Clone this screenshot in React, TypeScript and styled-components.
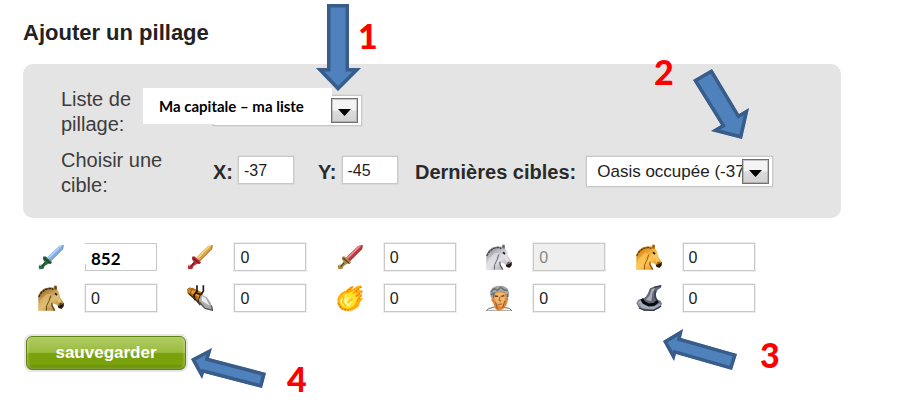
import React, { useId } from "react";
import styled, { createGlobalStyle, css } from "styled-components";

const GlobalStyle = createGlobalStyle`
  *, *::before, *::after { box-sizing: border-box; }
  body {
    margin: 0;
    background: #fff;
    color: #222;
    font-family: "Liberation Sans", Arial, sans-serif;
  }
`;

const Page = styled.main`
  position: relative;
  padding: 20px 74px 32px 23px;
`;

const Title = styled.h1`
  margin: 0 0 18px;
  font-size: 22px;
  line-height: 26px;
  font-weight: bold;
`;

const Panel = styled.section`
  display: grid;
  row-gap: 11px;
  padding: 23px 38px 20px;
  border-radius: 10px;
  background: #e4e4e4;
`;

const PanelRow = styled.div`
  display: grid;
  grid-template-columns: 152px 1fr;
  align-items: start;
`;

const RowLabel = styled.span`
  width: 110px;
  color: #3c3c3c;
  font-size: 20px;
  line-height: 25px;
`;

const RowControls = styled.div`
  padding-top: 8px;
`;

const TargetControls = styled(RowControls)`
  display: grid;
  grid-template-columns: 105px 97px auto;
`;

const Field = styled.div<{ $gap: number }>`
  display: flex;
  align-items: flex-start;
  gap: ${(p) => p.$gap}px;
`;

const FieldLabel = styled.label`
  color: #2a2a2a;
  font-size: 20px;
  line-height: 33px;
  font-weight: bold;
  white-space: nowrap;
`;

const typedStyle = css`
  border-left-width: 0;
  padding-left: 6px;
  outline: none;
  background: linear-gradient(#c8c8c8, #c8c8c8) left bottom / 1px 6px no-repeat #fff;
  color: #000;
  font-family: Lato, sans-serif;
  font-size: 17px;
  font-weight: bold;
`;

const TextInput = styled.input<{ $width: number; $typed?: boolean }>`
  width: ${(p) => p.$width}px;
  height: 28px;
  padding: 2px 5px 0;
  border: 1px solid #c8c8c8;
  outline: 1px solid rgba(200, 200, 200, 0.3);
  border-radius: 0;
  background: #fff;
  color: #222;
  font-family: "Liberation Sans", Arial, sans-serif;
  font-size: 16px;

  &:disabled {
    background: #efefef;
    color: #888;
  }

  ${(p) => p.$typed && typedStyle}
`;

const SelectBox = styled.div<{ $width: number }>`
  position: relative;
  width: ${(p) => p.$width}px;
  height: 31px;
`;

const Select = styled.select`
  appearance: none;
  width: 100%;
  height: 100%;
  padding: 0 20px 0 10px;
  border: 1px solid #c8c8c8;
  outline: 1px solid rgba(200, 200, 200, 0.3);
  border-radius: 0;
  background: #fff;
  color: #222;
  font-family: "Liberation Sans", Arial, sans-serif;
  font-size: 17px;
  text-overflow: clip;
`;

const DropMark = styled.span`
  position: absolute;
  top: 3px;
  right: 4px;
  display: flex;
  align-items: center;
  justify-content: center;
  width: 27px;
  height: 25px;
  padding-top: 4px;
  border: 1px solid #707070;
  outline: 1px solid rgba(112, 112, 112, 0.35);
  outline-offset: -2px;
  background: linear-gradient(#f4f4f4 0 48%, #dcdcdc 52%, #d0d0d0);
  pointer-events: none;
`;

const SelectTag = styled.span`
  position: absolute;
  top: -7px;
  left: -70px;
  width: 189px;
  padding-left: 16px;
  background: #fff;
  color: #000;
  font-family: Lato, sans-serif;
  font-size: 15px;
  font-weight: bold;
  line-height: 36px;
  white-space: nowrap;
  pointer-events: none;
`;

const Troops = styled.section`
  display: grid;
  grid-template-columns: repeat(5, 1fr);
  gap: 13px 0;
  max-width: 762px;
  margin-top: 25px;
  padding-left: 15px;
`;

const Troop = styled.label`
  display: flex;
  align-items: center;
  gap: 21px;
  height: 28px;
`;

const TroopIcon = styled.svg`
  width: 26px;
  height: 26px;
  flex: none;
`;

const SaveButton = styled.button`
  display: block;
  width: 160px;
  height: 34px;
  margin: 24px 0 0 3px;
  padding: 0;
  border: 1px solid #5d8410;
  border-radius: 6px;
  background: linear-gradient(#a2c046 0, #abc85c 12%, #9abb3d 48%, #7aa00c 52%, #7aa30a 84%, #587c04);
  box-shadow: 0 0 0 2px #e6e6ea, inset 0 0 3px 1px rgba(225, 240, 170, 0.45);
  color: #fff;
  font-family: "Liberation Sans", Arial, sans-serif;
  font-size: 17px;
  font-weight: bold;
`;

const ArrowLayer = styled.svg`
  position: absolute;
  top: 0;
  left: 0;
  pointer-events: none;
`;

const StepNumber = styled.span<{ $x: number; $y: number }>`
  position: absolute;
  left: ${(p) => p.$x}px;
  top: ${(p) => p.$y}px;
  color: #f00;
  font-family: Lato, sans-serif;
  font-size: 34px;
  font-weight: 900;
  line-height: 34px;
  pointer-events: none;
`;

function Arrow({ points }: { points: string }) {
  const id = useId();
  return (
    <g>
      <clipPath id={id}>
        <polygon points={points} />
      </clipPath>
      <polygon points={points} clipPath={`url(#${id})`} fill="#4f81bd" stroke="#385d8a" strokeWidth="7" />
    </g>
  );
}

function Caret() {
  return (
    <svg width="13" height="7" viewBox="0 0 13 7" aria-hidden="true">
      <path d="M0 0H13L6.5 7Z" fill="#000" />
    </svg>
  );
}

function Sword({ light, mid, edge, hilt, hiltDark }: Record<"light" | "mid" | "edge" | "hilt" | "hiltDark", string>) {
  return (
    <>
      <path d="M76 2L63 6L27 41L37 52L74 15Z" fill={mid} />
      <path d="M75 3L65 6L29 41L33 45Z" fill={light} />
      <path d="M76 4L74 15L38 51" fill="none" stroke={edge} strokeWidth="3" />
      <path d="M15 38L22 37L42 54L39 60L31 59L20 66L16 75L4 76L2 69L5 62L13 62L20 54L15 46Z" fill={hilt} />
      <path d="M18 42L36 57M21 56L11 68" stroke={hiltDark} strokeWidth="4" fill="none" />
      <path d="M6 65L10 64" stroke={light} strokeWidth="3" />
    </>
  );
}

function Horse({ light, mid, shade, dark }: Record<"light" | "mid" | "shade" | "dark", string>) {
  const g = useId();
  return (
    <>
      <linearGradient id={g} x1="0" y1="0" x2="0.7" y2="1">
        <stop offset="0" stopColor={shade} />
        <stop offset="0.3" stopColor={mid} />
        <stop offset="0.65" stopColor={light} />
        <stop offset="1" stopColor={mid} />
      </linearGradient>
      <path
        d="M1 77V31L7 20L18 11L34 7L46 8L50 1L56 2L57 14L63 22L67 38L77 54L77 64L70 71L62 69L58 60L48 56L42 54L43 61L49 69L52 77Z"
        fill={`url(#${g})`}
      />
      <path d="M2 36L10 23L23 13L39 10L46 14" fill="none" stroke={dark} strokeWidth="4" strokeDasharray="8 2" />
      <path d="M50 3L56 3L56 14L49 13Z" fill={shade} />
      <path d="M8 44L26 28L39 26L31 40L22 61L12 77H1V62Z" fill={light} opacity="0.7" />
      <path d="M38 32L34 46L26 62L25 77" fill="none" stroke={shade} strokeWidth="3" />
      <path d="M42 53L42 62L50 77" fill="none" stroke={shade} strokeWidth="4" />
      <path d="M50 30L61 43L66 52" fill="none" stroke={light} strokeWidth="9" />
      <path d="M51 25L57 30" stroke="#15110c" strokeWidth="5" />
      <path d="M77 53V64L71 71L62 69L59 62L69 60Z" fill="#21170e" />
      <path d="M64 58L71 56" stroke={dark} strokeWidth="4" />
    </>
  );
}

function Ram() {
  return (
    <>
      <path d="M4 12L17 8L47 23L46 42L38 53L3 27Z" fill="#b86d0d" />
      <path d="M8 16L22 17L43 31L39 38L9 22Z" fill="#ee9a25" />
      <path d="M2 12L9 8L15 13L10 25L3 26Z" fill="#d38525" stroke="#74440c" strokeWidth="2" />
      <path d="M30 1V19L21 30L24 46M49 1V19L40 31L35 51M27 24L42 29" fill="none" stroke="#201912" strokeWidth="5" />
      <path d="M42 29L59 36L71 53L77 76L56 71L37 56L36 43Z" fill="#aaa" />
      <path d="M45 33L56 39L68 62L44 47Z" fill="#eee" />
      <path d="M37 51L54 70L77 76L73 61" fill="none" stroke="#555" strokeWidth="4" />
      <path d="M7 27L30 48L40 60" fill="none" stroke="#3e2a13" strokeWidth="4" />
    </>
  );
}

function Fireball() {
  return (
    <>
      <path
        d="M77 17L65 28L76 27L67 39L78 39L69 52L64 66L48 76L24 78L8 70L1 56L2 38L12 24L27 16L39 6L49 3L45 13L63 2L75 2L64 14Z"
        fill="#ffad08"
      />
      <path d="M74 5L51 23M76 19L56 36M74 31L60 48M47 5L31 20M4 55L15 72L41 76" fill="none" stroke="#f27a08" strokeWidth="4" strokeDasharray="6 3" />
      <path d="M54 15L44 28L61 23L52 35L64 35L57 50L50 63L33 71L15 65L7 52L10 37L20 27L36 23Z" fill="#ffe22b" />
      <path d="M13 37L31 27L25 39L42 35L30 50L48 47L39 62L20 63L10 52Z" fill="#fff68a" />
      <path d="M8 42L21 34L17 52L28 64M32 54L46 40" fill="none" stroke="#ffc015" strokeWidth="5" />
    </>
  );
}

function Senator() {
  return (
    <>
      <path d="M1 78L7 71L25 66L53 67L70 70L78 78Z" fill="#eee" stroke="#777" strokeWidth="3" />
      <path d="M20 26L30 16L54 16L64 27L67 43L61 61L51 73L36 78L27 70L22 55L16 46Z" fill="#d9883c" />
      <path d="M27 27L38 21L55 24L58 37L55 55L47 65L35 59L25 41Z" fill="#f2b56c" />
      <path d="M12 23L18 9L31 3L51 2L64 10L70 23L68 37L60 34L56 22L43 18L29 22L24 35L15 39Z" fill="#a4a9a9" />
      <path d="M14 20L25 11L34 16L44 7L55 15L65 16M14 30L24 24L22 37M64 27L65 36" fill="none" stroke="#626b6d" strokeWidth="4" />
      <path d="M27 33L36 34M46 34L55 32" stroke="#5d3218" strokeWidth="4" />
      <path d="M42 35L39 47L46 48M36 58L49 57M29 52L34 72M56 48L50 69" fill="none" stroke="#a35323" strokeWidth="3" />
    </>
  );
}

function Hat() {
  return (
    <>
      <path d="M1 54L7 44L24 39L57 41L74 47L78 56L72 69L53 77L25 77L9 70Z" fill="#777d8e" />
      <path d="M4 52L20 42L17 54L32 62L51 66L67 58L75 57L65 69L46 74L18 69Z" fill="#a2aab6" />
      <path d="M18 43L29 36L36 25L42 10L54 5L77 1L75 8L65 14L59 28L64 48L52 60L33 59L20 52Z" fill="#656777" />
      <path d="M30 44L41 31L47 13L57 9L49 26L46 49Z" fill="#aaadb9" />
      <path d="M17 42L24 53L39 60L54 58L66 48" fill="none" stroke="#08090d" strokeWidth="9" />
      <path d="M54 7L75 2M58 18L57 36L64 47M9 69L25 75L53 76L75 63" fill="none" stroke="#363849" strokeWidth="4" />
    </>
  );
}

const troops = [
  { name: "Phalange", value: "852", typed: true, icon: <Sword light="#b0cff5" mid="#83ace0" edge="#628cbf" hilt="#326b43" hiltDark="#183e2b" /> },
  { name: "Combattant à l'épée", value: "0", icon: <Sword light="#f8d07d" mid="#dba146" edge="#9a6728" hilt="#b63039" hiltDark="#78151e" /> },
  { name: "Légionnaire", value: "0", icon: <Sword light="#ee8c8c" mid="#bd363e" edge="#872831" hilt="#a98d4c" hiltDark="#62401e" /> },
  { name: "Éclaireur", value: "0", disabled: true, icon: <Horse light="#e2e1e5" mid="#aaaab1" shade="#67666e" dark="#444249" /> },
  { name: "Éclair", value: "0", icon: <Horse light="#ffc657" mid="#df961d" shade="#9c5510" dark="#6b3b10" /> },
  { name: "Cavalier", value: "0", icon: <Horse light="#dfbd72" mid="#af8138" shade="#654518" dark="#38240f" /> },
  { name: "Bélier", value: "0", icon: <Ram /> },
  { name: "Catapulte", value: "0", icon: <Fireball /> },
  { name: "Chef", value: "0", icon: <Senator /> },
  { name: "Héros", value: "0", icon: <Hat /> },
];

const arrows = [
  "327,4 349,4 349,68 361,68 338,91 316,68 327,68",
  "693,80 712,69 739,114 749,108 742,139 711,131 721,125",
  "663,341 683,329 681,338 737,354 732,370 676,354 674,361",
  "191,359 212,348 209,358 266,373 262,388 204,373 202,379",
];

export default function App() {
  return (
    <>
      <GlobalStyle />
      <Page>
        <Title>Ajouter un pillage</Title>
        <Panel>
          <PanelRow>
            <RowLabel as="label" htmlFor="list">Liste de pillage:</RowLabel>
            <RowControls>
              <SelectBox $width={149}>
                <Select id="list" />
                <SelectTag>Ma capitale – ma liste</SelectTag>
                <DropMark><Caret /></DropMark>
              </SelectBox>
            </RowControls>
          </PanelRow>
          <PanelRow>
            <RowLabel>Choisir une cible:</RowLabel>
            <TargetControls>
              <Field $gap={5}>
                <FieldLabel htmlFor="x">X:</FieldLabel>
                <TextInput id="x" $width={56} defaultValue="-37" />
              </Field>
              <Field $gap={5}>
                <FieldLabel htmlFor="y">Y:</FieldLabel>
                <TextInput id="y" $width={56} defaultValue="-45" />
              </Field>
              <Field $gap={10}>
                <FieldLabel htmlFor="last">Dernières cibles:</FieldLabel>
                <SelectBox $width={187}>
                  <Select id="last">
                    <option>Oasis occupée (-37</option>
                  </Select>
                  <DropMark><Caret /></DropMark>
                </SelectBox>
              </Field>
            </TargetControls>
          </PanelRow>
        </Panel>
        <Troops>
          {troops.map((t) => (
            <Troop key={t.name}>
              <TroopIcon viewBox="0 0 78 78" aria-hidden="true">{t.icon}</TroopIcon>
              <TextInput $width={72} $typed={t.typed} aria-label={t.name} defaultValue={t.value} disabled={t.disabled} />
            </Troop>
          ))}
        </Troops>
        <SaveButton type="button">sauvegarder</SaveButton>
        <ArrowLayer width="800" height="400" viewBox="0 0 800 400" aria-hidden="true">
          {arrows.map((points) => (
            <Arrow key={points} points={points} />
          ))}
        </ArrowLayer>
        <StepNumber $x={358} $y={19}>1</StepNumber>
        <StepNumber $x={654} $y={55}>2</StepNumber>
        <StepNumber $x={760} $y={338}>3</StepNumber>
        <StepNumber $x={287} $y={362}>4</StepNumber>
      </Page>
    </>
  );
}
